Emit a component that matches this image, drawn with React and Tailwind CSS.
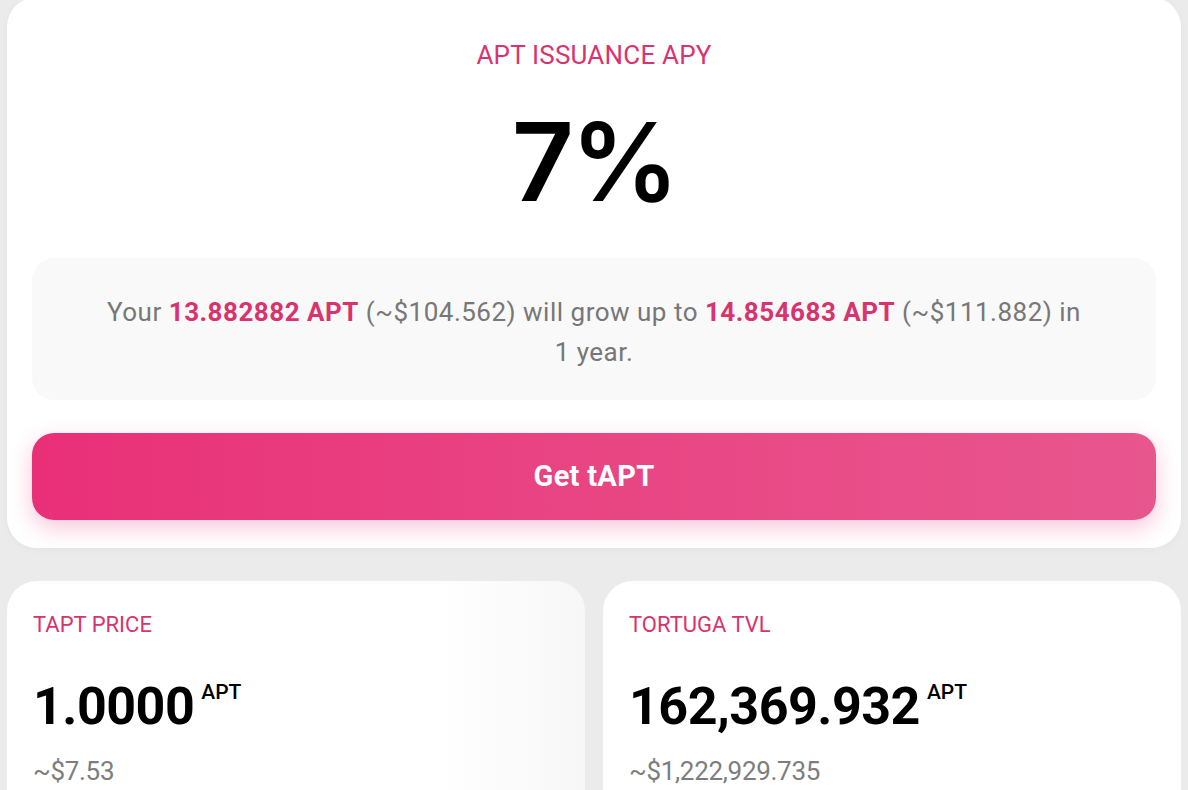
import React from "react";

export default function App() {
  return (
    <div className="h-[790px] w-[1188px] overflow-hidden bg-[#ebebeb] px-[7px]" style={{ fontFamily: "Roboto, 'Liberation Sans', sans-serif" }}>
      <div className="-mt-[3px] rounded-[30px] bg-white px-[25px] pb-[28px] pt-[42px] shadow-[0_2px_10px_rgba(0,0,0,0.03)]">
        <div className="text-center text-[26px] leading-[32px] tracking-[0.2px] text-[#d9336f]">APT ISSUANCE APY</div>
        <div className="mt-[37px] text-center text-[108px] font-semibold leading-[108px] tracking-[-3px] text-black" style={{ fontFamily: "Inter, 'Liberation Sans', sans-serif" }}>
          7%
        </div>
        <div className="mt-[42px] rounded-[22px] bg-[#f9f9f9] px-[20px] pb-[28px] pt-[34px] text-center text-[26px] leading-[40px] tracking-[0.5px] text-[#777777]">
          Your <span className="font-bold text-[#d9336f]">13.882882 APT</span> (~$104.562) will grow up to{" "}
          <span className="font-bold text-[#d9336f]">14.854683 APT</span> (~$111.882) in
          <br />1 year.
        </div>
        <button className="mt-[33px] flex h-[87px] w-full items-center justify-center rounded-[22px] bg-gradient-to-r from-[#e92f78] to-[#e8568e] text-[29px] font-bold tracking-[0.3px] text-white shadow-[0_8px_22px_rgba(233,49,122,0.28)]">
          Get tAPT
        </button>
      </div>

      <div className="mt-[33px] grid grid-cols-2 gap-[18px]">
        <StatCard label="TAPT PRICE" value="1.0000" sub="~$7.53" gradient />
        <StatCard label="TORTUGA TVL" value="162,369.932" sub="~$1,222,929.735" />
      </div>
    </div>
  );
}

function StatCard({ label, value, sub, gradient }) {
  return (
    <div
      className={
        "h-[260px] rounded-[30px] px-[26px] pt-[30px] " +
        (gradient ? "bg-gradient-to-r from-white from-75% to-[#f7f7f7]" : "bg-white")
      }
    >
      <div className="text-[22px] leading-[28px] text-[#d9336f]">{label}</div>
      <div className="mt-[38px] flex items-start">
        <span className="text-[52px] font-bold leading-[60px] tracking-[-0.5px] text-black">{value}</span>
        <span className="ml-[7px] mt-[3px] text-[21px] font-medium leading-[24px] text-black">APT</span>
      </div>
      <div className="mt-[18px] text-[26px] leading-[32px] tracking-[-0.3px] text-[#7d7d7d]">{sub}</div>
    </div>
  );
}
